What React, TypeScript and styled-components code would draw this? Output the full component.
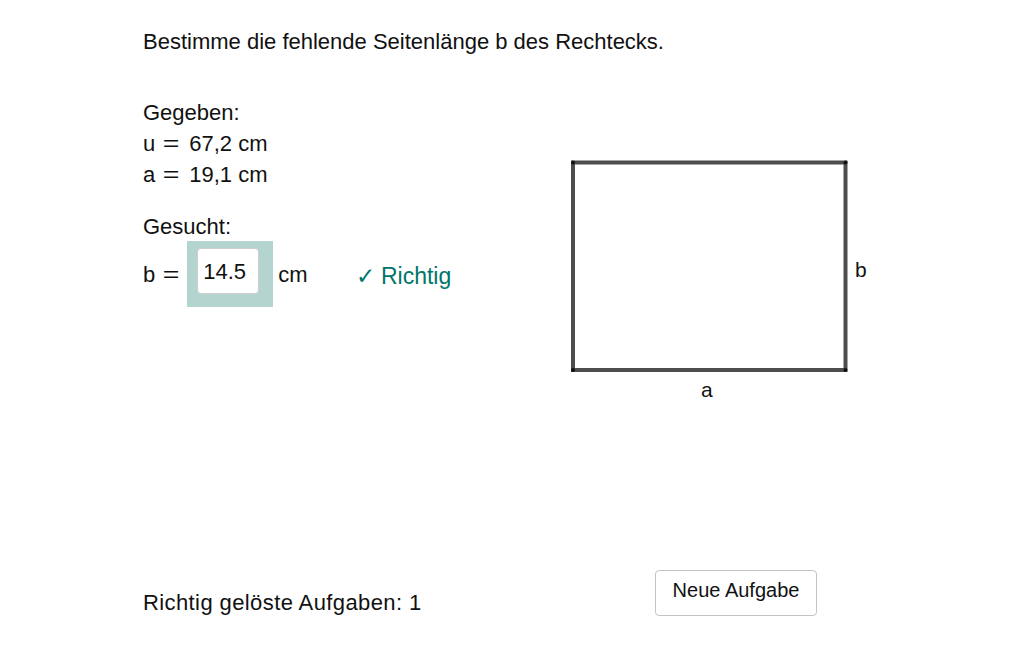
import React from "react";
import styled, { createGlobalStyle } from "styled-components";

const Global = createGlobalStyle`
  html, body { margin: 0; padding: 0; background: #ffffff; }
  body { font-family: "Liberation Sans", Arial, sans-serif; color: #111; }
`;

const Page = styled.div`
  width: 1032px;
  height: 645px;
  box-sizing: border-box;
  padding: 26px 0 29px 143px;
  display: flex;
  flex-direction: column;
  font-size: 22px;
`;

const Title = styled.div`
  line-height: 32px;
`;

const Content = styled.div`
  display: flex;
  align-items: flex-start;
  margin-top: 39px;
`;

const LeftColumn = styled.div`
  width: 417px;
  display: flex;
  flex-direction: column;
`;

const Line = styled.div<{ $gapTop?: number }>`
  line-height: 31px;
  margin-top: ${(p) => p.$gapTop ?? 0}px;
`;

const Eq = styled.span<{ $tight?: boolean }>`
  display: inline-block;
  width: 22px;
  text-align: center;
  margin: 0 ${(p) => (p.$tight ? 0 : 7)}px 0 5px;
  transform: scaleX(1.3);
`;

const AnswerRow = styled.div`
  display: flex;
  align-items: center;
  line-height: 31px;
  margin-top: -1px;
`;

const Highlight = styled.div`
  margin-left: 5px;
  width: 86px;
  height: 66px;
  box-sizing: border-box;
  background: #b3d4cf;
  padding: 7px 14px 13px 10px;
`;

const InputBox = styled.div`
  width: 100%;
  height: 100%;
  box-sizing: border-box;
  background: #fff;
  border: 1px solid #cfcfcf;
  border-radius: 4px;
  padding-left: 5px;
  display: flex;
  align-items: center;
`;

const Unit = styled.span`
  margin-left: 5px;
`;

const Feedback = styled.span`
  margin-left: 48px;
  margin-top: 5px;
  color: #00766a;
  font-size: 23px;
`;

const Figure = styled.svg`
  margin-top: 53px;
  display: block;
`;

const Footer = styled.div`
  margin-top: auto;
  display: flex;
  align-items: flex-end;
`;

const Score = styled.div`
  width: 512px;
  line-height: 24px;
  margin-bottom: 1px;
  letter-spacing: 0.4px;
`;

const Button = styled.button`
  width: 162px;
  height: 46px;
  box-sizing: border-box;
  background: #fff;
  border: 1px solid #c4c4c4;
  border-radius: 4px;
  font-family: inherit;
  font-size: 20px;
  color: #111;
  padding: 0 0 5px;
  margin-bottom: 0;
`;

const labelFont = "Liberation Sans, Arial, sans-serif";

export default function App() {
  return (
    <>
      <Global />
      <Page>
        <Title>Bestimme die fehlende Seitenlänge b des Rechtecks.</Title>
        <Content>
          <LeftColumn>
            <Line>Gegeben:</Line>
            <Line>
              u<Eq>=</Eq>67,2 cm
            </Line>
            <Line>
              a<Eq>=</Eq>19,1 cm
            </Line>
            <Line $gapTop={21}>Gesucht:</Line>
            <AnswerRow>
              <span>b</span>
              <Eq $tight>=</Eq>
              <Highlight>
                <InputBox>14.5</InputBox>
              </Highlight>
              <Unit>cm</Unit>
              <Feedback>✓ Richtig</Feedback>
            </AnswerRow>
          </LeftColumn>
          <Figure width="330" height="260" viewBox="0 0 330 260">
            <rect x="13" y="12.5" width="272.5" height="207.5" fill="none" stroke="#4d4d4d" strokeWidth="4" />
            <circle cx="13" cy="12.5" r="2" fill="#111" />
            <circle cx="285.5" cy="12.5" r="2" fill="#111" />
            <circle cx="13" cy="220" r="2" fill="#111" />
            <circle cx="285.5" cy="220" r="2" fill="#111" />
            <text x="295" y="127" fontSize="21" fill="#111" fontFamily={labelFont}>b</text>
            <text x="141" y="247" fontSize="21" fill="#111" fontFamily={labelFont}>a</text>
          </Figure>
        </Content>
        <Footer>
          <Score>Richtig gelöste Aufgaben: 1</Score>
          <Button>Neue Aufgabe</Button>
        </Footer>
      </Page>
    </>
  );
}
